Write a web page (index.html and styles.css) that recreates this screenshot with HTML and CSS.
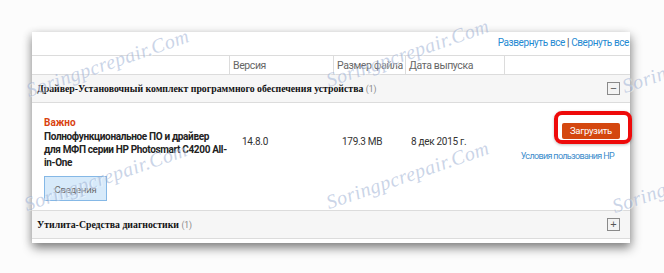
FILE: index.html
```html
<!DOCTYPE html>
<html lang="ru">
<head>
<meta charset="utf-8">
<title>Драйверы</title>
<link rel="stylesheet" href="styles.css">
</head>
<body>
<div class="panel">
  <div class="toplinks"><a class="lnk">Развернуть все</a> <span class="sep">|</span> <a class="lnk">Свернуть все</a></div>
  <div class="thead">
    <div class="th"></div>
    <div class="th">Версия</div>
    <div class="th">Размер файла</div>
    <div class="th">Дата выпуска</div>
    <div class="th"></div>
  </div>
  <div class="section">
    <div class="sec-title">Драйвер-Установочный комплект программного обеспечения устройства <span class="cnt">(1)</span></div>
    <div class="toggle">&minus;</div>
  </div>
  <div class="item">
    <div class="cell-main">
      <div class="important">Важно</div>
      <div class="name">Полнофункциональное ПО и драйвер<br>для МФП серии HP Photosmart C4200 All-<br>in-One</div>
      <div class="details">Сведения</div>
    </div>
    <div class="cell">14.8.0</div>
    <div class="cell">179.3 MB</div>
    <div class="cell">8 дек 2015 г.</div>
    <div class="cell-act">
      <div class="ring"><div class="dl">Загрузить</div></div>
      <a class="terms">Условия пользования HP</a>
    </div>
  </div>
  <div class="section section2">
    <div class="sec-title">Утилита-Средства диагностики <span class="cnt">(1)</span></div>
    <div class="toggle plus">+</div>
  </div>
</div>
<div class="wm wm1">Soringpcrepair.Com</div>
<div class="wm wm2">Soringpcrepair.Com</div>
<div class="wm wm3">Soringpcrepair.Com</div>
<div class="wm wm4">Soringpcrepair.Com</div>
<div class="wm wm5">Soringpcrepair.Com</div>
<div class="wm wm6">Soringpcrepair.Com</div>
</body>
</html>
```
FILE: styles.css
```css
html, body {
  margin: 0;
  padding: 0;
}
body {
  background: #fcfcfc;
  width: 664px;
  height: 273px;
  overflow: hidden;
  position: relative;
  font-family: Roboto, "Liberation Sans", sans-serif;
}
.panel {
  margin: 32px 0 0 32px;
  width: 598px;
  background: #fff;
  box-shadow: 1px 5px 10px rgba(0, 0, 0, 0.45), -2px 2px 8px rgba(0, 0, 0, 0.12);
  padding-bottom: 4px;
}
.toplinks {
  height: 23px;
  box-sizing: border-box;
  text-align: right;
  padding: 4px 1px 0 0;
  font-size: 10px;
  letter-spacing: -0.4px;
  color: #1f8ad2;
  line-height: 14px;
  white-space: nowrap;
}
.lnk { color: #1f8ad2; }
.sep { color: #444; }
.thead {
  display: grid;
  grid-template-columns: 197px 104px 72px 99px 126px;
  height: 20px;
  box-sizing: border-box;
  border-top: 1px solid #dcdcdc;
  border-bottom: 1px solid #dcdcdc;
}
.th {
  font-size: 10.5px;
  letter-spacing: -0.4px;
  color: #666;
  padding: 3px 0 0 3px;
  border-left: 1px solid #dcdcdc;
  line-height: 14px;
  white-space: nowrap;
}
.th:first-child { border-left: none; }
.section {
  height: 28px;
  box-sizing: border-box;
  background: #f6f6f6;
  border-bottom: 1px solid #dcdcdc;
  display: flex;
  align-items: center;
  justify-content: space-between;
  padding: 0 10px 0 5px;
}
.sec-title {
  font-family: "Liberation Serif", serif;
  font-weight: bold;
  font-size: 9.8px;
  color: #111;
  white-space: nowrap;
}
.cnt {
  font-family: Roboto, sans-serif;
  font-weight: normal;
  font-size: 8.5px;
  color: #888;
}
.toggle {
  width: 11px;
  height: 11px;
  border: 1px solid #8a8a8a;
  background: #f3f3f3;
  font-family: "Liberation Sans", sans-serif;
  font-size: 11px;
  line-height: 10px;
  text-align: center;
  color: #555;
}
.item {
  display: grid;
  grid-template-columns: 197px 104px 72px 99px 126px;
  height: 108px;
  box-sizing: border-box;
  border-bottom: 1px solid #dcdcdc;
}
.cell-main { padding: 13px 0 0 12px; }
.important {
  color: #d9420f;
  font-weight: bold;
  font-size: 10px;
  line-height: 13px;
}
.name {
  margin-top: 1px;
  font-weight: bold;
  font-size: 10px;
  letter-spacing: -0.35px;
  line-height: 13px;
  color: #222;
  white-space: nowrap;
}
.details {
  margin-top: 7px;
  width: 61px;
  height: 23px;
  border: 1px solid #85b8e6;
  background: #d7eafa;
  color: #6a6a6a;
  font-size: 9.5px;
  letter-spacing: -0.2px;
  text-align: center;
  line-height: 26px;
}
.cell {
  font-size: 10px;
  letter-spacing: -0.3px;
  color: #333;
  padding: 33px 0 0 13px;
  white-space: nowrap;
}
.cell:nth-child(3) { padding-left: 9px; }
.cell:nth-child(4) { padding-left: 6px; }
.cell-act {
  display: flex;
  flex-direction: column;
  align-items: flex-end;
  padding: 8px 0 0 0;
}
.ring {
  margin-right: -2px;
  border: 4px solid #ee0a0a;
  border-radius: 8px;
  padding: 8px 8px 1px 4px;
  box-shadow: 0 1px 3px rgba(0, 0, 0, 0.25);
}
.dl {
  width: 58px;
  height: 16px;
  background: #d4470f;
  border-radius: 2px;
  color: #fff;
  font-size: 9.5px;
  letter-spacing: -0.3px;
  text-align: center;
  line-height: 16px;
}
.terms {
  margin-top: 7px;
  margin-right: 16px;
  font-size: 9px;
  letter-spacing: -0.65px;
  color: #3d8dcc;
  white-space: nowrap;
}
.section2 {
  height: 28px;
}
.wm {
  position: absolute;
  font-family: "Liberation Serif", serif;
  font-style: italic;
  font-size: 20px;
  line-height: 20px;
  letter-spacing: 0.5px;
  color: rgba(150, 170, 208, 0.5);
  text-shadow: 1px 1px 0 rgba(255, 255, 255, 0.45);
  transform: rotate(-19deg);
  transform-origin: left bottom;
  white-space: nowrap;
  pointer-events: none;
}
.wm1 { left: 30px; top: 80px; }
.wm2 { left: 28px; top: 194px; }
.wm3 { left: 330px; top: 192px; }
.wm4 { left: 330px; top: 70px; }
.wm5 { left: 626px; top: 76px; }
.wm6 { left: 616px; top: 196px; }
```
